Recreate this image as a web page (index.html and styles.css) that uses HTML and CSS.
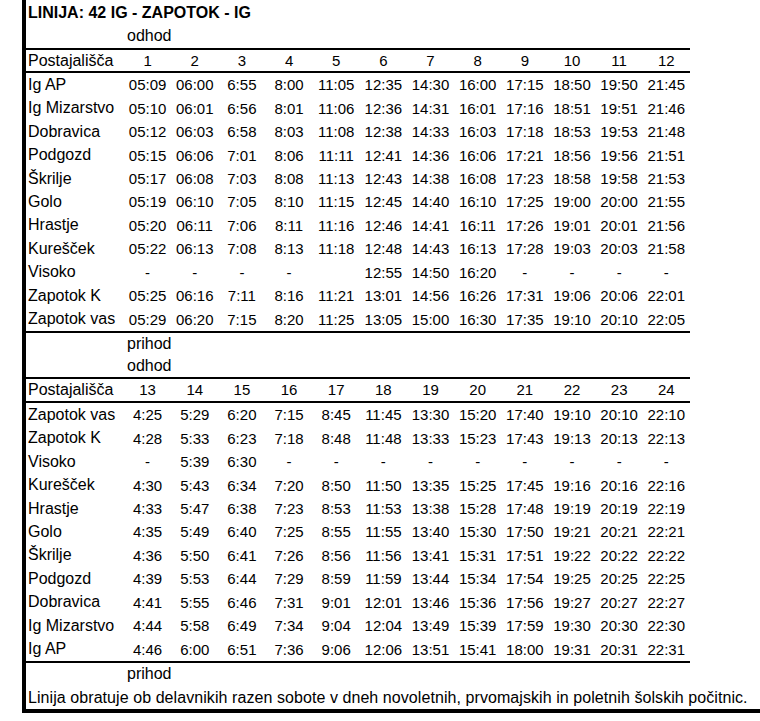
FILE: index.html
```html
<!DOCTYPE html>
<html lang="sl">
<head>
<meta charset="utf-8">
<title>Linija 42 IG - ZAPOTOK - IG</title>
<link rel="stylesheet" href="styles.css">
</head>
<body>
<div class="sheet">
  <div class="title">LINIJA: 42 IG - ZAPOTOK - IG</div>
  <div class="grid note-row h24"><span class="note">odhod</span></div>
  <div class="grid head h25"><span class="lbl">Postajališča</span><span>1</span><span>2</span><span>3</span><span>4</span><span>5</span><span>6</span><span>7</span><span>8</span><span>9</span><span>10</span><span>11</span><span>12</span></div>
  <div class="block">
    <div class="grid row"><span class="lbl">Ig AP</span><span>05:09</span><span>06:00</span><span>6:55</span><span>8:00</span><span>11:05</span><span>12:35</span><span>14:30</span><span>16:00</span><span>17:15</span><span>18:50</span><span>19:50</span><span>21:45</span></div>
    <div class="grid row"><span class="lbl">Ig Mizarstvo</span><span>05:10</span><span>06:01</span><span>6:56</span><span>8:01</span><span>11:06</span><span>12:36</span><span>14:31</span><span>16:01</span><span>17:16</span><span>18:51</span><span>19:51</span><span>21:46</span></div>
    <div class="grid row"><span class="lbl">Dobravica</span><span>05:12</span><span>06:03</span><span>6:58</span><span>8:03</span><span>11:08</span><span>12:38</span><span>14:33</span><span>16:03</span><span>17:18</span><span>18:53</span><span>19:53</span><span>21:48</span></div>
    <div class="grid row"><span class="lbl">Podgozd</span><span>05:15</span><span>06:06</span><span>7:01</span><span>8:06</span><span>11:11</span><span>12:41</span><span>14:36</span><span>16:06</span><span>17:21</span><span>18:56</span><span>19:56</span><span>21:51</span></div>
    <div class="grid row"><span class="lbl">Škrilje</span><span>05:17</span><span>06:08</span><span>7:03</span><span>8:08</span><span>11:13</span><span>12:43</span><span>14:38</span><span>16:08</span><span>17:23</span><span>18:58</span><span>19:58</span><span>21:53</span></div>
    <div class="grid row"><span class="lbl">Golo</span><span>05:19</span><span>06:10</span><span>7:05</span><span>8:10</span><span>11:15</span><span>12:45</span><span>14:40</span><span>16:10</span><span>17:25</span><span>19:00</span><span>20:00</span><span>21:55</span></div>
    <div class="grid row"><span class="lbl">Hrastje</span><span>05:20</span><span>06:11</span><span>7:06</span><span>8:11</span><span>11:16</span><span>12:46</span><span>14:41</span><span>16:11</span><span>17:26</span><span>19:01</span><span>20:01</span><span>21:56</span></div>
    <div class="grid row"><span class="lbl">Kurešček</span><span>05:22</span><span>06:13</span><span>7:08</span><span>8:13</span><span>11:18</span><span>12:48</span><span>14:43</span><span>16:13</span><span>17:28</span><span>19:03</span><span>20:03</span><span>21:58</span></div>
    <div class="grid row"><span class="lbl">Visoko</span><span>-</span><span>-</span><span>-</span><span>-</span><span></span><span>12:55</span><span>14:50</span><span>16:20</span><span>-</span><span>-</span><span>-</span><span>-</span></div>
    <div class="grid row"><span class="lbl">Zapotok K</span><span>05:25</span><span>06:16</span><span>7:11</span><span>8:16</span><span>11:21</span><span>13:01</span><span>14:56</span><span>16:26</span><span>17:31</span><span>19:06</span><span>20:06</span><span>22:01</span></div>
    <div class="grid row"><span class="lbl">Zapotok vas</span><span>05:29</span><span>06:20</span><span>7:15</span><span>8:20</span><span>11:25</span><span>13:05</span><span>15:00</span><span>16:30</span><span>17:35</span><span>19:10</span><span>20:10</span><span>22:05</span></div>
  </div>
  <div class="grid note-row ruled h24"><span class="note">prihod</span></div>
  <div class="grid note-row h22"><span class="note">odhod</span></div>
  <div class="grid head h26"><span class="lbl">Postajališča</span><span>13</span><span>14</span><span>15</span><span>16</span><span>17</span><span>18</span><span>19</span><span>20</span><span>21</span><span>22</span><span>23</span><span>24</span></div>
  <div class="block">
    <div class="grid row"><span class="lbl">Zapotok vas</span><span>4:25</span><span>5:29</span><span>6:20</span><span>7:15</span><span>8:45</span><span>11:45</span><span>13:30</span><span>15:20</span><span>17:40</span><span>19:10</span><span>20:10</span><span>22:10</span></div>
    <div class="grid row"><span class="lbl">Zapotok K</span><span>4:28</span><span>5:33</span><span>6:23</span><span>7:18</span><span>8:48</span><span>11:48</span><span>13:33</span><span>15:23</span><span>17:43</span><span>19:13</span><span>20:13</span><span>22:13</span></div>
    <div class="grid row"><span class="lbl">Visoko</span><span>-</span><span>5:39</span><span>6:30</span><span>-</span><span>-</span><span>-</span><span>-</span><span>-</span><span>-</span><span>-</span><span>-</span><span>-</span></div>
    <div class="grid row"><span class="lbl">Kurešček</span><span>4:30</span><span>5:43</span><span>6:34</span><span>7:20</span><span>8:50</span><span>11:50</span><span>13:35</span><span>15:25</span><span>17:45</span><span>19:16</span><span>20:16</span><span>22:16</span></div>
    <div class="grid row"><span class="lbl">Hrastje</span><span>4:33</span><span>5:47</span><span>6:38</span><span>7:23</span><span>8:53</span><span>11:53</span><span>13:38</span><span>15:28</span><span>17:48</span><span>19:19</span><span>20:19</span><span>22:19</span></div>
    <div class="grid row"><span class="lbl">Golo</span><span>4:35</span><span>5:49</span><span>6:40</span><span>7:25</span><span>8:55</span><span>11:55</span><span>13:40</span><span>15:30</span><span>17:50</span><span>19:21</span><span>20:21</span><span>22:21</span></div>
    <div class="grid row"><span class="lbl">Škrilje</span><span>4:36</span><span>5:50</span><span>6:41</span><span>7:26</span><span>8:56</span><span>11:56</span><span>13:41</span><span>15:31</span><span>17:51</span><span>19:22</span><span>20:22</span><span>22:22</span></div>
    <div class="grid row"><span class="lbl">Podgozd</span><span>4:39</span><span>5:53</span><span>6:44</span><span>7:29</span><span>8:59</span><span>11:59</span><span>13:44</span><span>15:34</span><span>17:54</span><span>19:25</span><span>20:25</span><span>22:25</span></div>
    <div class="grid row"><span class="lbl">Dobravica</span><span>4:41</span><span>5:55</span><span>6:46</span><span>7:31</span><span>9:01</span><span>12:01</span><span>13:46</span><span>15:36</span><span>17:56</span><span>19:27</span><span>20:27</span><span>22:27</span></div>
    <div class="grid row"><span class="lbl">Ig Mizarstvo</span><span>4:44</span><span>5:58</span><span>6:49</span><span>7:34</span><span>9:04</span><span>12:04</span><span>13:49</span><span>15:39</span><span>17:59</span><span>19:30</span><span>20:30</span><span>22:30</span></div>
    <div class="grid row"><span class="lbl">Ig AP</span><span>4:46</span><span>6:00</span><span>6:51</span><span>7:36</span><span>9:06</span><span>12:06</span><span>13:51</span><span>15:41</span><span>18:00</span><span>19:31</span><span>20:31</span><span>22:31</span></div>
  </div>
  <div class="grid note-row ruled h25"><span class="note">prihod</span></div>
  <div class="footer">Linija obratuje ob delavnikih razen sobote v dneh novoletnih, prvomajskih in poletnih šolskih počitnic.</div>
</div>
</body>
</html>
```

FILE: styles.css
```css
* { box-sizing: border-box; }
html, body { margin: 0; padding: 0; background: #fff; }
body {
  font-family: "Liberation Sans", Arial, sans-serif;
  color: #000;
  font-size: 16px;
}
.sheet {
  margin-left: 22px;
  width: 760px;
  border-left: 4px solid #000;
  border-bottom: 4px solid #000;
}
.title {
  height: 24px;
  line-height: 26px;
  padding-left: 2px;
  font-weight: bold;
  font-size: 16px;
}
.grid {
  display: grid;
  grid-template-columns: 98px repeat(12, 47.166px);
  width: 664px;
  align-items: center;
}
.grid span {
  text-align: center;
  font-size: 15px;
  white-space: nowrap;
}
.grid span.lbl {
  text-align: left;
  padding-left: 2px;
  font-size: 16px;
}
.grid span.note {
  grid-column: 2 / span 3;
  text-align: left;
  padding-left: 3px;
  font-size: 16px;
}
.h22 { height: 22px; }
.h24 { height: 24px; }
.h25 { height: 25px; }
.h26 { height: 26px; }
.head {
  border-top: 2px solid #000;
  border-bottom: 2px solid #000;
}
.ruled { border-top: 2px solid #000; }
.block .row { height: 23.4545px; }
.footer {
  height: 23px;
  line-height: 23px;
  padding-left: 2px;
  white-space: nowrap;
  letter-spacing: 0.07px;
}
```
